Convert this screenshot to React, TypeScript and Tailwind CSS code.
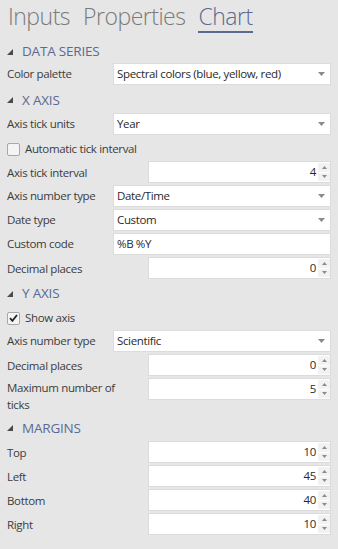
const font = { fontFamily: '"Open Sans", "Noto Sans", sans-serif' };

function Caret() {
  return (
    <svg width="7" height="4" viewBox="0 0 7 4" className="mr-[5px] shrink-0">
      <path d="M0 0h7L3.5 4z" fill="#8a8a8a" />
    </svg>
  );
}

function Spinner() {
  return (
    <div className="flex w-[12px] shrink-0 flex-col gap-[1px] py-[1px]">
      <div className="flex h-[9px] items-center justify-center bg-[#f2f2f2]">
        <svg width="5" height="3" viewBox="0 0 5 3">
          <path d="M0 3h5L2.5 0z" fill="#8a8a8a" />
        </svg>
      </div>
      <div className="flex h-[9px] items-center justify-center bg-[#f2f2f2]">
        <svg width="5" height="3" viewBox="0 0 5 3">
          <path d="M0 0h5L2.5 3z" fill="#8a8a8a" />
        </svg>
      </div>
    </div>
  );
}

function Header({ title, className = "" }: { title: string; className?: string }) {
  return (
    <div className={"flex items-center " + className}>
      <svg width="6" height="6" viewBox="0 0 6 6" className="mr-[9px]">
        <path d="M6 0v6H0z" fill="#4a4a4a" />
      </svg>
      <span className="text-[13.5px] tracking-[-0.2px] text-[#5a6a92]">{title}</span>
    </div>
  );
}

const labelText = "text-[11.5px] tracking-[-0.35px] text-[#3c3c3c]";
const valueText = "text-[11.5px] tracking-[-0.35px] text-[#2a2a2a]";

function SelectRow({ label, value }: { label: string; value: string }) {
  return (
    <div className="flex h-[24px] items-start">
      <div className={"flex h-[22px] w-[106px] shrink-0 items-center " + labelText}>{label}</div>
      <div className="flex h-[22px] flex-1 items-center justify-between border border-[#dcdcdc] bg-white pl-[3px]">
        <span className={valueText}>{value}</span>
        <Caret />
      </div>
    </div>
  );
}

function TextRow({ label, value }: { label: string; value: string }) {
  return (
    <div className="flex h-[24px] items-start">
      <div className={"flex h-[22px] w-[106px] shrink-0 items-center " + labelText}>{label}</div>
      <div className="flex h-[22px] flex-1 items-center border border-[#dcdcdc] bg-white pl-[3px]">
        <span className={valueText}>{value}</span>
      </div>
    </div>
  );
}

function NumberRow({ label, value, tall = false }: { label: string; value: string; tall?: boolean }) {
  return (
    <div className={"flex items-start " + (tall ? "h-[37px]" : "h-[24px]")}>
      <div className="w-[141px] shrink-0">
        <div
          className={
            "w-[118px] leading-[17px] " + labelText + (tall ? " pt-[1px]" : " flex h-[22px] items-center")
          }
        >
          {label}
        </div>
      </div>
      <div className="flex h-[22px] flex-1 items-stretch border border-[#dcdcdc] bg-white">
        <div className={"flex flex-1 items-center justify-end pr-[2px] " + valueText}>{value}</div>
        <Spinner />
      </div>
    </div>
  );
}

function Check({ label, checked }: { label: string; checked: boolean }) {
  return (
    <div className="flex h-[24px] items-center">
      <div className="mr-[5px] flex h-[13px] w-[13px] items-center justify-center rounded-[2px] border border-[#a8a8a8] bg-[#f4f4f4]">
        {checked && (
          <svg width="9" height="8" viewBox="0 0 9 8">
            <path d="M1 4.2l2.4 2.6L8 1" stroke="#222" strokeWidth="1.8" fill="none" />
          </svg>
        )}
      </div>
      <span className={labelText}>{label}</span>
    </div>
  );
}

export default function App() {
  return (
    <div className="h-[549px] w-[338px] overflow-hidden bg-[#e6e6e6] pl-[7px] pr-[7px]" style={font}>
      <div className="flex h-[40px] items-start gap-[13px] pl-[1px] pt-[2px] text-[23px] font-light leading-[29px] tracking-[-0.5px]">
        <span className="text-[#7a7a7a]">Inputs</span>
        <span className="text-[#7a7a7a]">Properties</span>
        <span className="border-b-2 border-[#5a6a92] text-[#5a6a92]">Chart</span>
      </div>

      <Header title="DATA SERIES" className="h-[23px]" />
      <SelectRow label="Color palette" value="Spectral colors (blue, yellow, red)" />

      <Header title="X AXIS" className="h-[26px]" />
      <SelectRow label="Axis tick units" value="Year" />
      <Check label="Automatic tick interval" checked={false} />
      <NumberRow label="Axis tick interval" value="4" />
      <SelectRow label="Axis number type" value="Date/Time" />
      <SelectRow label="Date type" value="Custom" />
      <TextRow label="Custom code" value="%B %Y" />
      <NumberRow label="Decimal places" value="0" />

      <Header title="Y AXIS" className="h-[25px]" />
      <Check label="Show axis" checked={true} />
      <SelectRow label="Axis number type" value="Scientific" />
      <NumberRow label="Decimal places" value="0" />
      <NumberRow label="Maximum number of ticks" value="5" tall />

      <Header title="MARGINS" className="h-[26px]" />
      <NumberRow label="Top" value="10" />
      <NumberRow label="Left" value="45" />
      <NumberRow label="Bottom" value="40" />
      <NumberRow label="Right" value="10" />
    </div>
  );
}
